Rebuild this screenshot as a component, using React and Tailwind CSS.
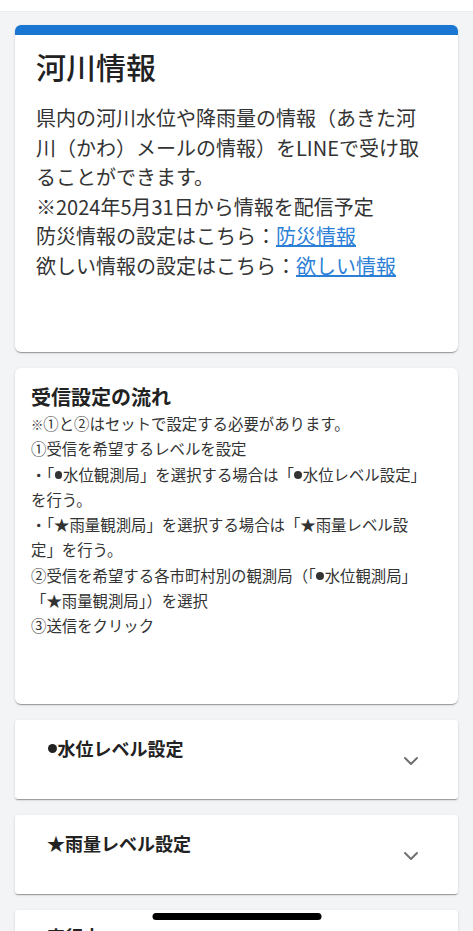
import { ChevronDown } from 'lucide-react';

const font = { fontFamily: '"Noto Sans CJK JP", "Noto Sans", sans-serif' };

const paper =
  'shadow-[0_2px_1px_-1px_rgba(0,0,0,0.2),0_1px_1px_0_rgba(0,0,0,0.14),0_1px_3px_0_rgba(0,0,0,0.12)]';

// small black circle like the iOS rendering of ●
function Dot() {
  return <span className="inline-block size-[0.5em] rounded-full bg-current align-[0.13em] mx-[0.04em]" />;
}

function Accordion({ children }) {
  return (
    <div className={`bg-white rounded-[3px] h-[79px] flex items-start justify-between pl-[32px] pr-[35px] ${paper}`}>
      <h3 className="pt-[16px] text-[18px] leading-[24px] font-bold text-[#222]">{children}</h3>
      <ChevronDown size={24} strokeWidth={2} className="text-[#707070] mt-[29px]" />
    </div>
  );
}

export default function App() {
  return (
    <div className="min-h-screen bg-[#f3f4f5] text-[#333]" style={font}>
      <div className="h-[12px] bg-white border-b border-[#ececec]" />

      <div className="flex flex-col gap-4 px-[15px] pt-[13px] pb-10">
        <div className={`bg-white rounded-[6px] overflow-hidden ${paper}`}>
          <div className="h-[10px] bg-[#1976d2]" />
          <div className="pl-[21px] pr-[20px] pt-[11px] pb-[72px]">
            <h1 className="text-[30px] leading-[40px] font-medium text-[#222]">河川情報</h1>
            <p className="mt-[17px] text-[20px] leading-[29.5px] whitespace-nowrap">
              県内の河川水位や降雨量の情報（あきた河<br />
              川（かわ）メールの情報）をLINEで受け取<br />
              ることができます。<br />
              ※2024年5月31日から情報を配信予定<br />
              防災情報の設定はこちら：<a href="#" className="text-[#2c7fd6] underline">防災情報</a><br />
              欲しい情報の設定はこちら：<a href="#" className="text-[#2c7fd6] underline">欲しい情報</a>
            </p>
          </div>
        </div>

        <div className={`bg-white rounded-[6px] px-[16px] pt-[15px] pb-[65px] ${paper}`}>
          <h2 className="text-[20px] leading-[28px] font-bold text-[#222]">受信設定の流れ</h2>
          <p className="text-[15.4px] leading-[25.3px] whitespace-nowrap">
            <span className="text-[0.8em] leading-none">※</span>①と②はセットで設定する必要があります。<br />
            ①受信を希望するレベルを設定<br />
            ・「<Dot />水位観測局」を選択する場合は「<Dot />水位レベル設定」<br />
            を行う。<br />
            ・「★雨量観測局」を選択する場合は「★雨量レベル設<br />
            定」を行う。<br />
            ②受信を希望する各市町村別の観測局（「<Dot />水位観測局」<br />
            「★雨量観測局」）を選択<br />
            ③送信をクリック
          </p>
        </div>

        <Accordion>
          <Dot />水位レベル設定
        </Accordion>
        <Accordion>★雨量レベル設定</Accordion>

        <div className={`bg-white rounded-[3px] h-[120px] pl-[32px] pt-[14px] ${paper}`}>
          <h3 className="text-[18px] leading-[24px] font-bold text-[#222]">実行中</h3>
        </div>
      </div>

      <div className="fixed bottom-[11px] left-1/2 -translate-x-1/2 w-[169px] h-[7px] rounded-full bg-black" />
    </div>
  );
}
